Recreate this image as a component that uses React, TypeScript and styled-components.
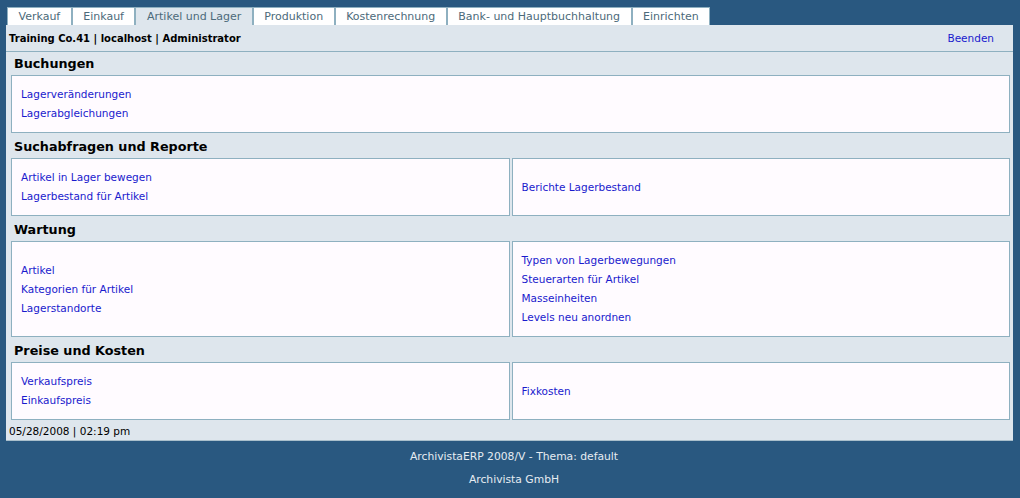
import React from "react";
import styled, { createGlobalStyle } from "styled-components";

const GlobalStyle = createGlobalStyle`
  html, body {
    margin: 0;
    padding: 0;
    background: #295880;
    font-family: "DejaVu Sans", Verdana, sans-serif;
    font-size: 10.5px;
  }
`;

type Section = {
  title: string;
  left: string[];
  right?: string[];
};

const tabs = [
  "Verkauf",
  "Einkauf",
  "Artikel und Lager",
  "Produktion",
  "Kostenrechnung",
  "Bank- und Hauptbuchhaltung",
  "Einrichten",
];

const sections: Section[] = [
  { title: "Buchungen", left: ["Lagerveränderungen", "Lagerabgleichungen"] },
  {
    title: "Suchabfragen und Reporte",
    left: ["Artikel in Lager bewegen", "Lagerbestand für Artikel"],
    right: ["Berichte Lagerbestand"],
  },
  {
    title: "Wartung",
    left: ["Artikel", "Kategorien für Artikel", "Lagerstandorte"],
    right: [
      "Typen von Lagerbewegungen",
      "Steuerarten für Artikel",
      "Masseinheiten",
      "Levels neu anordnen",
    ],
  },
  {
    title: "Preise und Kosten",
    left: ["Verkaufspreis", "Einkaufspreis"],
    right: ["Fixkosten"],
  },
];

const App = () => {
  return (
    <Page>
      <GlobalStyle />
      <TabBar>
        {tabs.map((t) => (
          <Tab key={t} $active={t === "Artikel und Lager"}>
            {t}
          </Tab>
        ))}
      </TabBar>
      <Panel>
        <Header>
          <Company>Training Co.41 | localhost | Administrator</Company>
          <Link href="#">Beenden</Link>
        </Header>
        <Sections>
          {sections.map((s) => (
            <React.Fragment key={s.title}>
              <Heading>{s.title}</Heading>
              <Row>
                <Box>
                  {s.left.map((l) => (
                    <Link key={l} href="#">
                      {l}
                    </Link>
                  ))}
                </Box>
                {s.right && (
                  <Box>
                    {s.right.map((l) => (
                      <Link key={l} href="#">
                        {l}
                      </Link>
                    ))}
                  </Box>
                )}
              </Row>
            </React.Fragment>
          ))}
        </Sections>
        <DateLine>05/28/2008 | 02:19 pm</DateLine>
      </Panel>
      <Footer>
        <FooterLine>ArchivistaERP 2008/V - Thema: default</FooterLine>
        <FooterLine>Archivista GmbH</FooterLine>
      </Footer>
    </Page>
  );
};

export default App;

const Page = styled.div`
  width: 1020px;
  height: 498px;
  background: #295880;
  padding-top: 7px;
  box-sizing: border-box;
`;

const TabBar = styled.div`
  display: flex;
  margin-left: 7px;
  height: 18px;
`;

const Tab = styled.div<{ $active?: boolean }>`
  box-sizing: border-box;
  height: 18px;
  padding: 0 10.5px;
  display: flex;
  align-items: center;
  border: 1px solid #8eb0c0;
  border-bottom: none;
  background: ${(p) => (p.$active ? "#dee6ed" : "#ffffff")};
  color: #4c6a7a;
  font-size: 11px;
  white-space: nowrap;
`;

const Panel = styled.div`
  margin: 0 7px 0 6px;
  background: #dee6ed;
  border-bottom: 1px solid #a9bfcc;
`;

const Header = styled.div`
  height: 25px;
  display: flex;
  align-items: center;
  justify-content: space-between;
  padding: 1px 19px 0 3px;
  border-bottom: 1px solid #8eb0c0;
`;

const Company = styled.span`
  font-weight: bold;
  color: #000;
  font-size: 10px;
`;

const Link = styled.a`
  color: #1a1acd;
  text-decoration: none;
  font-size: 10.5px;
  line-height: 19px;
  display: block;
`;

const Sections = styled.div`
  padding: 0 3px 0 5px;
`;

const Heading = styled.div`
  height: 23px;
  display: flex;
  align-items: center;
  padding: 0 3px;
  font-size: 12.75px;
  font-weight: bold;
  color: #000;
`;

const Row = styled.div`
  display: flex;
  gap: 2px;
  margin-bottom: 2px;
`;

const Box = styled.div`
  flex: 1;
  min-width: 0;
  box-sizing: border-box;
  background: #fffbff;
  border: 1px solid #8eb0c0;
  padding: 9px 9px;
  display: flex;
  flex-direction: column;
  justify-content: center;
`;

const DateLine = styled.div`
  height: 18px;
  display: flex;
  align-items: center;
  padding-left: 3px;
  font-size: 10.5px;
  color: #000;
`;

const Footer = styled.div`
  padding: 4px 0 0 8px;
  display: flex;
  flex-direction: column;
  align-items: center;
`;

const FooterLine = styled.div`
  color: #e6ecf2;
  font-size: 10.75px;
  line-height: 23px;
`;
